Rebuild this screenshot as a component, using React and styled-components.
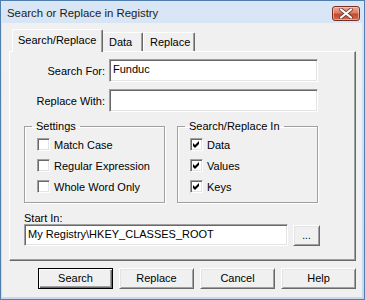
import React from "react";
import styled, { createGlobalStyle } from "styled-components";

const GlobalStyle = createGlobalStyle`
  html, body { margin: 0; padding: 0; background: #ffffff; }
  * { box-sizing: border-box; }
`;

const UI_FONT = `"Liberation Sans", Arial, sans-serif`;

const Window = styled.div`
  width: 365px;
  height: 300px;
  border: 1px solid #4f7eaf;
  background: linear-gradient(#d9e6f5, #c6d9ee);
  display: flex;
  flex-direction: column;
  font-family: ${UI_FONT};
  font-size: 11px;
  color: #000;
`;

const TitleBar = styled.div`
  height: 22px;
  flex: none;
  display: flex;
  align-items: center;
  justify-content: space-between;
  padding: 0 4px 0 6px;
`;

const Title = styled.span`
  font-family: ${UI_FONT};
  font-size: 11.4px;
  color: #1b1b1b;
  padding-top: 2px;
`;

const CloseButton = styled.div`
  width: 28px;
  height: 15px;
  margin-top: 3px;
  border: 1px solid #7a2e22;
  border-radius: 3px;
  background: linear-gradient(#eaa99a 0%, #dc7b63 45%, #c44a2c 55%, #d0674a 100%);
  box-shadow: inset 0 0 0 1px rgba(255, 220, 210, 0.55);
  display: flex;
  align-items: center;
  justify-content: center;
`;

const Client = styled.div`
  flex: 1;
  background: #f0f0f0;
  margin: 0 2px 2px 1px;
  display: flex;
  flex-direction: column;
  padding: 6px 0 0 7px;
`;

const TabStrip = styled.div`
  display: flex;
  align-items: flex-end;
  height: 22px;
  padding-left: 3px;
`;

const Tab = styled.div`
  position: relative;
  height: ${(p) => (p.$active ? 23 : 19)}px;
  margin-bottom: ${(p) => (p.$active ? -1 : 0)}px;
  z-index: ${(p) => (p.$active ? 1 : 0)};
  width: ${(p) => p.$w}px;
  margin-left: ${(p) => p.$ml || 0}px;
  background: #f0f0f0;
  border-top: 1px solid #ffffff;
  border-left: 1px solid #ffffff;
  border-right: 1px solid #696969;
  border-radius: 2px 2px 0 0;
  box-shadow: inset -1px 0 0 #a0a0a0;
  padding: ${(p) => (p.$active ? "4px 0 0 5px" : "3px 0 0 6px")};
  line-height: 13px;
  white-space: nowrap;
`;

const TabPanel = styled.div`
  width: 347px;
  height: 210px;
  border-top: 1px solid #ffffff;
  border-left: 1px solid #ffffff;
  border-right: 1px solid #696969;
  border-bottom: 1px solid #696969;
  box-shadow: inset -1px -1px 0 #a0a0a0;
  padding: 7px 0 0 0;
  display: flex;
  flex-direction: column;
`;

const FieldRow = styled.div`
  display: flex;
  align-items: center;
  height: 23px;
  margin-bottom: 7px;
`;

const FieldLabel = styled.span`
  width: 95px;
  text-align: right;
  margin-right: 4px;
`;

const TextBox = styled.div`
  width: ${(p) => p.$w}px;
  height: ${(p) => p.$h || 23}px;
  background: #ffffff;
  border: 1px solid;
  border-color: #a0a0a0 #ffffff #ffffff #a0a0a0;
  box-shadow: inset 1px 1px 0 #696969, inset -1px -1px 0 #e3e3e3;
  padding: 2px 0 0 3px;
  line-height: 14px;
  white-space: nowrap;
`;

const Groups = styled.div`
  display: flex;
  gap: 12px;
  margin: 1px 0 0 14px;
`;

const GroupBox = styled.fieldset`
  width: 141px;
  height: 83px;
  margin: 0;
  padding: 1px 0 0 12px;
  border: 1px solid #a0a0a0;
  box-shadow: 1px 1px 0 #ffffff, inset 1px 1px 0 #ffffff;
`;

const Legend = styled.legend`
  margin-left: -5px;
  padding: 0 4px;
  line-height: 13px;
  font-size: 11px;
`;

const CheckRow = styled.div`
  display: flex;
  align-items: center;
  height: 21px;
  gap: 4px;
`;

const CheckBox = styled.div`
  width: 13px;
  height: 13px;
  flex: none;
  background: #ffffff;
  border: 1px solid;
  border-color: #a0a0a0 #ffffff #ffffff #a0a0a0;
  box-shadow: inset 1px 1px 0 #696969, inset -1px -1px 0 #e3e3e3;
  display: flex;
  align-items: center;
  justify-content: center;
`;

const StartLabel = styled.div`
  margin: 9px 0 0 14px;
  line-height: 13px;
`;

const PathRow = styled.div`
  display: flex;
  align-items: center;
  gap: 5px;
  margin: -1px 0 0 14px;
`;

const RaisedButton = styled.div`
  width: ${(p) => p.$w}px;
  height: ${(p) => p.$h}px;
  background: #f0f0f0;
  border: 1px solid;
  border-color: ${(p) => (p.$default ? "#000000" : "#ffffff #696969 #696969 #ffffff")};
  box-shadow: ${(p) =>
    p.$default
      ? "inset 1px 1px 0 #ffffff, inset -1px -1px 0 #696969, inset -2px -2px 0 #a0a0a0"
      : "inset 1px 1px 0 #e3e3e3, inset -1px -1px 0 #a0a0a0"};
  display: flex;
  align-items: center;
  justify-content: center;
  line-height: 13px;
  font-size: ${(p) => p.$fs || 11}px;
`;

const ButtonRow = styled.div`
  display: flex;
  gap: 6px;
  margin: 7px 0 0 29px;
`;

const Check = ({ on, label }) => (
  <CheckRow>
    <CheckBox>
      {on && (
        <svg width="7" height="7" viewBox="0 0 7 7">
          <path d="M0 2 L2 4 L6 0 L6 3 L2 7 L0 5 Z" fill="#000" />
        </svg>
      )}
    </CheckBox>
    <span>{label}</span>
  </CheckRow>
);

export default function App() {
  return (
    <>
      <GlobalStyle />
      <Window>
        <TitleBar>
          <Title>Search or Replace in Registry</Title>
          <CloseButton>
            <svg width="14" height="11" viewBox="0 0 14 11">
              <path d="M2 1.5 L12 9.5 M12 1.5 L2 9.5" stroke="#6b3a33" strokeWidth="3.6" strokeLinecap="round" />
              <path d="M2 1.5 L12 9.5 M12 1.5 L2 9.5" stroke="#ffffff" strokeWidth="2.2" strokeLinecap="round" />
            </svg>
          </CloseButton>
        </TitleBar>
        <Client>
          <TabStrip>
            <Tab $active $w={91}>Search/Replace</Tab>
            <Tab $w={41} $ml={-1}>Data</Tab>
            <Tab $w={52}>Replace</Tab>
          </TabStrip>
          <TabPanel>
            <FieldRow>
              <FieldLabel>Search For:</FieldLabel>
              <TextBox $w={209}>Funduc</TextBox>
            </FieldRow>
            <FieldRow>
              <FieldLabel>Replace With:</FieldLabel>
              <TextBox $w={209} />
            </FieldRow>
            <Groups>
              <GroupBox>
                <Legend>Settings</Legend>
                <Check label="Match Case" />
                <Check label="Regular Expression" />
                <Check label="Whole Word Only" />
              </GroupBox>
              <GroupBox>
                <Legend>Search/Replace In</Legend>
                <Check on label="Data" />
                <Check on label="Values" />
                <Check on label="Keys" />
              </GroupBox>
            </Groups>
            <StartLabel>Start In:</StartLabel>
            <PathRow>
              <TextBox $w={264} $h={22}>My Registry\HKEY_CLASSES_ROOT</TextBox>
              <RaisedButton $w={27} $h={21} $fs={10}>...</RaisedButton>
            </PathRow>
          </TabPanel>
          <ButtonRow>
            <RaisedButton $default $w={75} $h={21}>Search</RaisedButton>
            <RaisedButton $w={75} $h={21}>Replace</RaisedButton>
            <RaisedButton $w={75} $h={21}>Cancel</RaisedButton>
            <RaisedButton $w={75} $h={21}>Help</RaisedButton>
          </ButtonRow>
        </Client>
      </Window>
    </>
  );
}
